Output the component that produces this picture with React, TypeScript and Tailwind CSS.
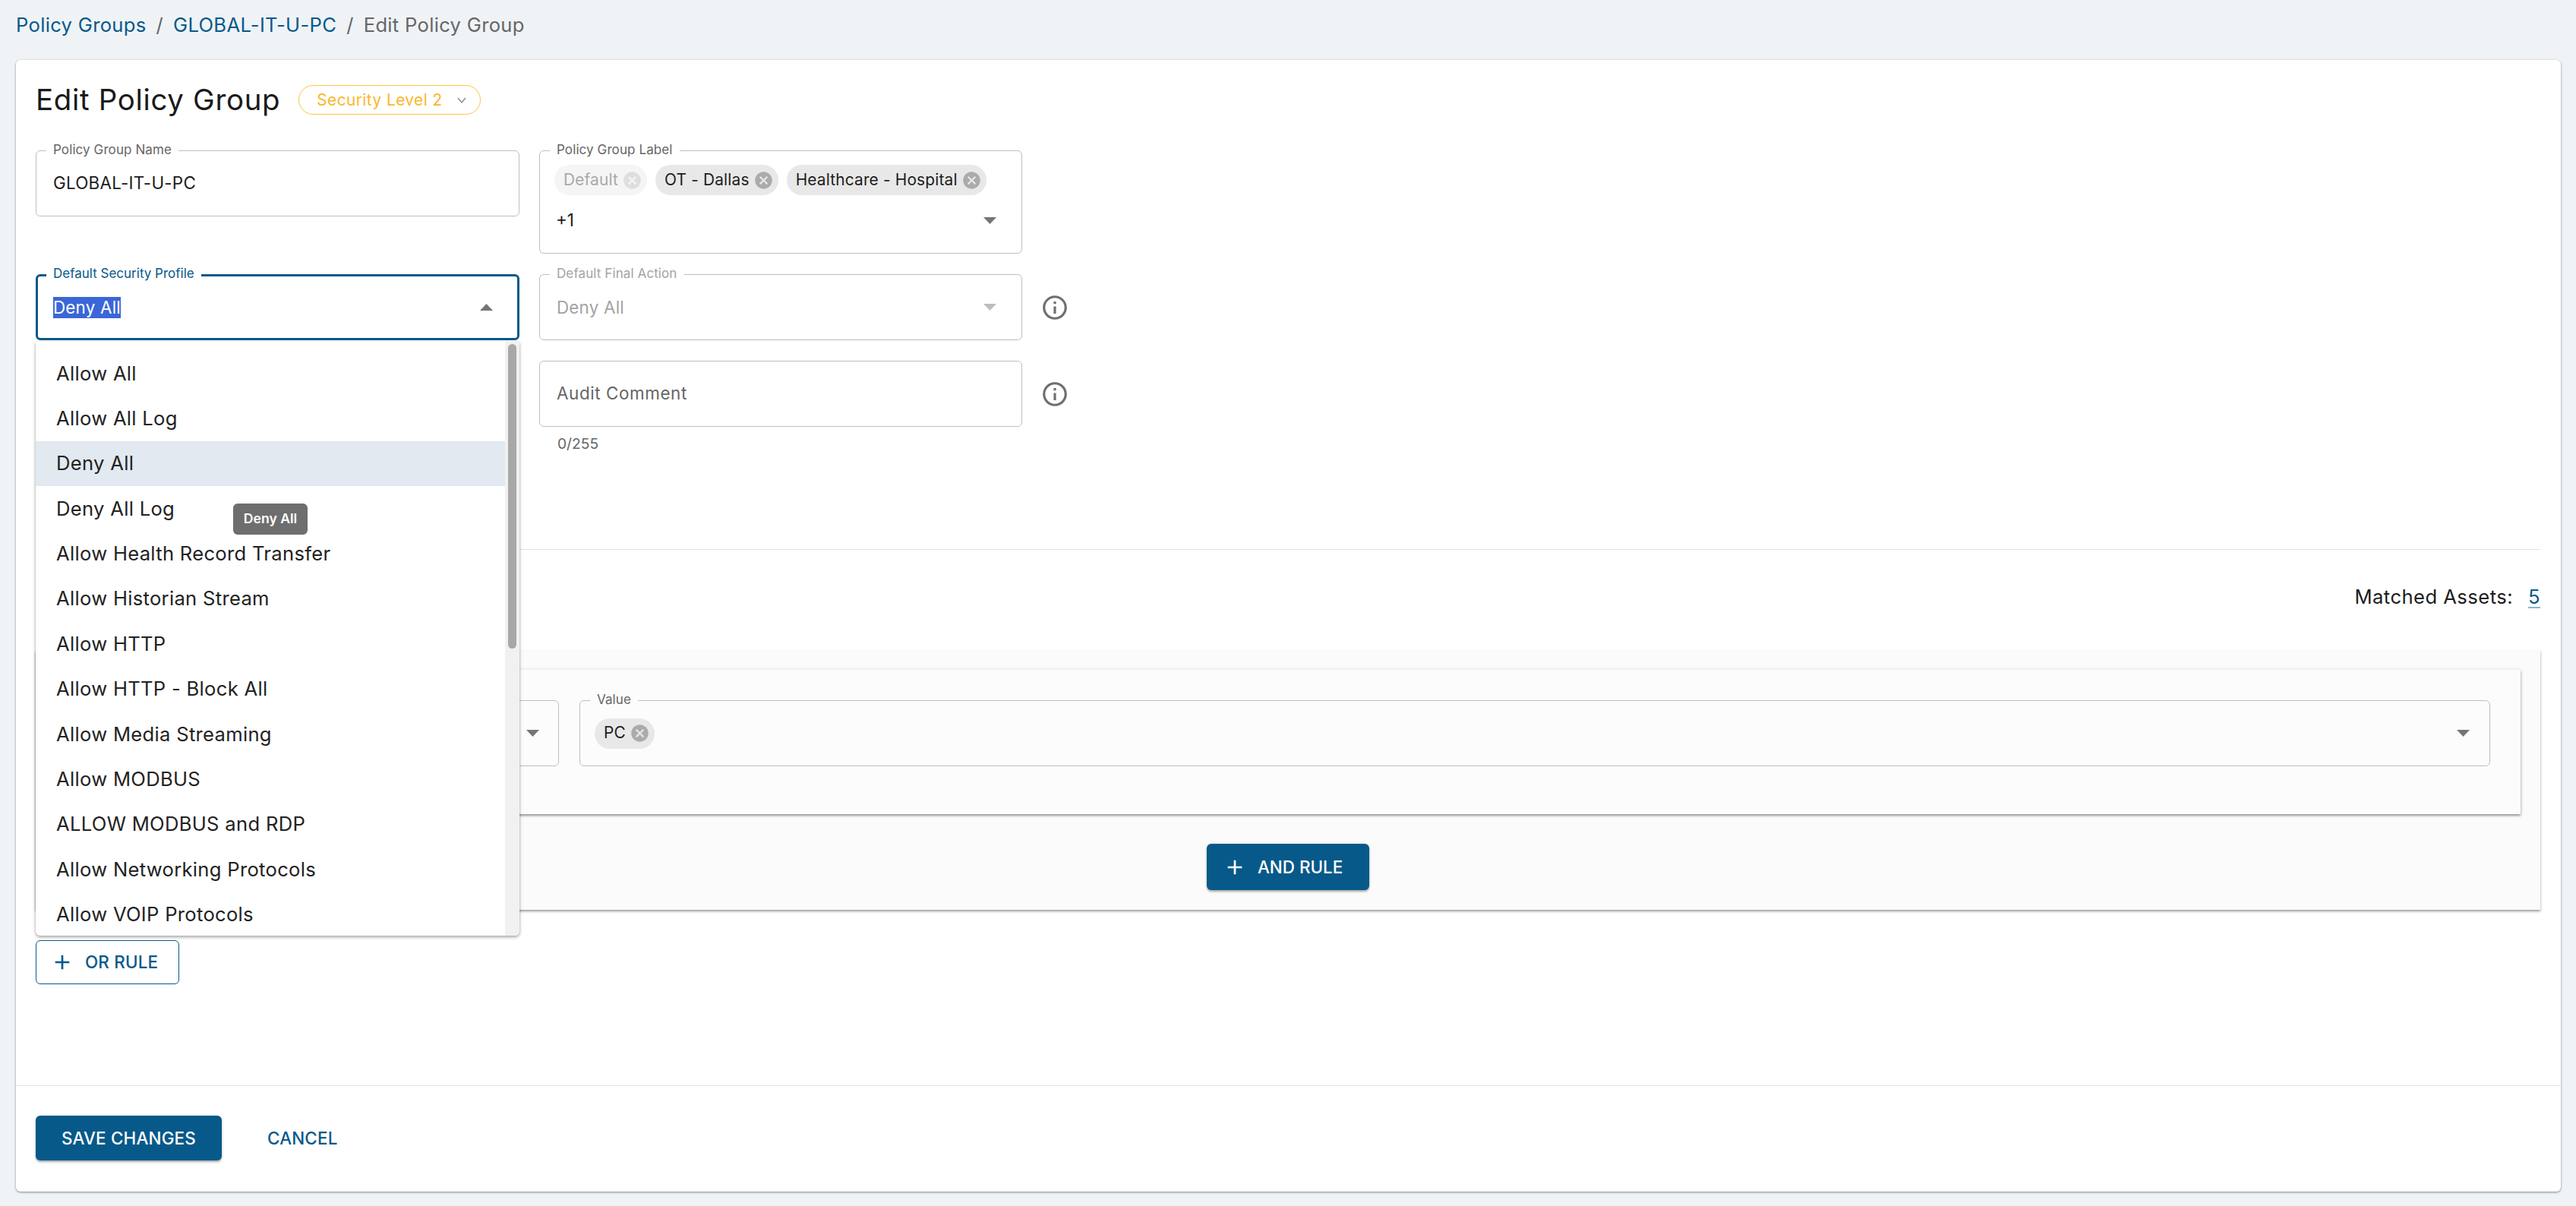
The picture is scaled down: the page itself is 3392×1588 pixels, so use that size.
import type { ReactNode } from 'react';

const menuItems = [
  'Allow All',
  'Allow All Log',
  'Deny All',
  'Deny All Log',
  'Allow Health Record Transfer',
  'Allow Historian Stream',
  'Allow HTTP',
  'Allow HTTP - Block All',
  'Allow Media Streaming',
  'Allow MODBUS',
  'ALLOW MODBUS and RDP',
  'Allow Networking Protocols',
  'Allow VOIP Protocols',
];

function Caret({ up = false, className = 'fill-[#757575]' }: { up?: boolean; className?: string }) {
  return (
    <svg width="17" height="9" viewBox="0 0 17 9" className={`${className} shrink-0 ${up ? 'rotate-180' : ''}`}>
      <path d="M0 0h17l-8.5 9z" />
    </svg>
  );
}

function ChipX({ className }: { className: string }) {
  return (
    <svg width="27" height="27" viewBox="0 0 24 24" className={`${className} shrink-0`}>
      <path d="M12 2C6.47 2 2 6.47 2 12s4.47 10 10 10 10-4.47 10-10S17.53 2 12 2zm5 13.59L15.59 17 12 13.41 8.41 17 7 15.59 10.59 12 7 8.41 8.41 7 12 10.59 15.59 7 17 8.41 13.41 12 17 15.59z" />
    </svg>
  );
}

function Chip({ label, disabled = false }: { label: string; disabled?: boolean }) {
  return (
    <span
      className={`flex h-[40px] items-center gap-[5px] rounded-full pl-[12px] pr-[6px] text-[20.8px] leading-none tracking-[0.2px] ${
        disabled ? 'bg-[#f5f5f5] text-[#a9a9a9]' : 'bg-[#e8e8e8] text-[#1c1c1c]'
      }`}
    >
      {label}
      <ChipX className={disabled ? 'fill-[#dedede]' : 'fill-[#ababab]'} />
    </span>
  );
}

function InfoIcon() {
  return (
    <svg width="38" height="38" viewBox="0 0 24 24" className="ml-[24px] shrink-0 fill-[#6f6f6f]">
      <path d="M11 7h2v2h-2zm0 4h2v6h-2zm1-9C6.48 2 2 6.48 2 12s4.48 10 10 10 10-4.48 10-10S17.52 2 12 2zm0 18c-4.41 0-8-3.59-8-8s3.59-8 8-8 8 3.59 8 8-3.59 8-8 8z" />
    </svg>
  );
}

function Plus({ className }: { className: string }) {
  return (
    <svg width="32" height="32" viewBox="0 0 24 24" className={className}>
      <path d="M19 13h-6v6h-2v-6H5v-2h6V5h2v6h6v2z" />
    </svg>
  );
}

function Field({
  label,
  labelColor = 'text-[#666666]',
  labelBg = 'bg-white',
  className = '',
  children,
}: {
  label?: string;
  labelColor?: string;
  labelBg?: string;
  className?: string;
  children?: ReactNode;
}) {
  return (
    <div className={`relative rounded-[6px] border border-[#bfbfbf] ${className}`}>
      {label && (
        <span className={`absolute left-[13px] top-[-12px] px-[9px] text-[17px] leading-[20px] tracking-[0.1px] ${labelBg} ${labelColor}`}>
          {label}
        </span>
      )}
      {children}
    </div>
  );
}

function Dropdown() {
  return (
    <div className="absolute left-0 top-[89px] z-10 flex h-[782px] w-[637px] overflow-hidden rounded-b-[6px] bg-white shadow-[0_2px_4px_rgba(0,0,0,0.35),0_0_3px_rgba(0,0,0,0.08)]">
      <div className="flex-1 pt-[12px]">
        {menuItems.map((item) => (
          <div
            key={item}
            className={`flex h-[59.4px] items-center px-[27px] text-[25.6px] tracking-[0.3px] text-[#222222] ${
              item === 'Deny All' ? 'bg-[#e2e9f0]' : ''
            }`}
          >
            {item}
          </div>
        ))}
      </div>
      <div className="w-[19px] bg-[#f1f1f1] px-[4px] pt-[3px]">
        <div className="h-[401px] rounded-full bg-[#a8a8a8]" />
      </div>
      <div className="absolute left-[260px] top-[213px] flex h-[41px] w-[98px] items-center justify-center rounded-[6px] bg-[#6e6e6e] text-[17.6px] font-semibold text-white">
        Deny All
      </div>
    </div>
  );
}

export default function App() {
  return (
    <div className="flex h-[1588px] flex-col overflow-hidden bg-[#eff3f6] font-[370] text-[#1c1c1c] [font-family:Inter,sans-serif]">
      {/* Breadcrumbs */}
      <nav className="flex h-[66px] items-center gap-[13px] px-[21px] text-[25.6px] tracking-[0.3px]">
        <span className="text-[#07598a]">Policy Groups</span>
        <span className="text-[#666666]">/</span>
        <span className="text-[#07598a]">GLOBAL-IT-U-PC</span>
        <span className="text-[#666666]">/</span>
        <span className="text-[#666666]">Edit Policy Group</span>
      </nav>

      <div className="ml-[21px] mr-[20px] mt-[13px] flex h-[1490px] flex-col rounded-[6px] bg-white pt-[33px] shadow-[0_1px_3px_rgba(0,0,0,0.45)]">
        <div className="pl-[26px] pr-[27px]">
          {/* Title */}
          <div className="flex h-[39px] items-center">
            <h1 className="text-[38.4px] font-normal leading-none tracking-[0.7px] text-[#1a1a1a]">Edit Policy Group</h1>
            <button className="ml-[24px] flex h-[39px] w-[240px] items-center rounded-full border border-[#fcc541] pl-[23px] text-[20.8px] tracking-[0.45px] text-[#fbb62c]">
              Security Level 2
              <svg width="12" height="8" viewBox="0 0 12 8" className="ml-[19px] fill-none stroke-[#8a8a8a] stroke-[1.4]">
                <path d="M1 1l5 6 5-6" />
              </svg>
            </button>
          </div>

          {/* Form */}
          <div className="mt-[47px] flex gap-[26px]">
            <Field label="Policy Group Name" className="flex h-[87px] w-[637px] items-center pb-[2px] pl-[22px] text-[22.4px] tracking-[0.25px]">
              GLOBAL-IT-U-PC
            </Field>
            <Field label="Policy Group Label" className="h-[136px] w-[636px] pl-[19px] pr-[33px] pt-[18px]">
              <div className="flex gap-[11px]">
                <Chip label="Default" disabled />
                <Chip label="OT - Dallas" />
                <Chip label="Healthcare - Hospital" />
              </div>
              <div className="mt-[15px] flex h-[36px] items-center justify-between pl-[2px] text-[22.4px]">
                +1
                <Caret />
              </div>
            </Field>
          </div>

          <div className="relative mt-[27px] flex items-center gap-[26px]">
            <div className="relative flex h-[87px] w-[637px] items-center justify-between rounded-[6px] border-[3px] border-[#07598a] pl-[20px] pr-[32px]">
              <span className="absolute left-[11px] top-[-14px] bg-white px-[9px] text-[17px] leading-[20px] text-[#07598a]">
                Default Security Profile
              </span>
              <span className="bg-[#3a66d8] text-[22.4px] leading-[28px] tracking-[0.2px] text-white">Deny All</span>
              <Caret up />
            </div>
            <div className="flex items-center">
              <Field
                label="Default Final Action"
                labelColor="text-[#a3a3a3]"
                className="flex h-[87px] w-[636px] items-center justify-between pl-[22px] pr-[33px] text-[22.4px] tracking-[0.2px] text-[#a3a3a3]"
              >
                Deny All
                <Caret className="fill-[#bdbdbd]" />
              </Field>
              <InfoIcon />
            </div>
            <Dropdown />
          </div>

          <div className="mt-[27px] flex items-center pl-[663px]">
            <Field className="flex h-[87px] w-[636px] items-center pb-[1px] pl-[22px] text-[22.4px] tracking-[0.6px] text-[#666666]">
              Audit Comment
            </Field>
            <InfoIcon />
          </div>
          <div className="ml-[687px] mt-[10px] text-[19.2px] leading-[24px] text-[#666666]">0/255</div>

          <div className="mt-[127px] h-px bg-[#e2e2e2]" />

          <div className="mt-[44px] flex h-[36px] items-center justify-end text-[25.6px] tracking-[0.45px]">
            Matched Assets:
            <span className="ml-[20px] text-[#07598a] underline decoration-[#8fb3c9] underline-offset-[4px]">5</span>
          </div>

          {/* Rules */}
          <div className="mt-[52px] h-[342px] bg-[#fbfbfb] pt-[26px] shadow-[0_2px_3px_rgba(0,0,0,0.4)]">
            <div className="mx-[26px] flex h-[190px] gap-[27px] bg-[#fcfcfc] px-[40px] pt-[40px] shadow-[0_2px_3px_rgba(0,0,0,0.4),0_0_6px_rgba(0,0,0,0.08)]">
              <Field className="flex h-[87px] w-[623px] items-center justify-end pr-[25px]">
                <Caret />
              </Field>
              <Field
                label="Value"
                labelBg="bg-[#fcfcfc]"
                className="flex h-[87px] flex-1 items-center justify-between pl-[19px] pr-[26px]"
              >
                <Chip label="PC" />
                <Caret />
              </Field>
            </div>
            <button className="mx-auto mt-[39px] flex h-[61px] w-[214px] items-center rounded-[6px] bg-[#07598a] pl-[21px] text-[22.4px] font-medium text-white shadow-[0_2px_3px_rgba(0,0,0,0.35)]">
              <Plus className="fill-white" />
              <span className="ml-[14px]">AND RULE</span>
            </button>
          </div>

          <button className="mt-[40px] flex h-[58px] w-[189px] items-center rounded-[6px] border border-[#07598a] pl-[18px] text-[22.4px] font-medium tracking-[0.2px] text-[#07598a]">
            <Plus className="fill-[#07598a]" />
            <span className="ml-[14px]">OR RULE</span>
          </button>
        </div>

        {/* Footer */}
        <div className="mt-auto flex h-[140px] items-start gap-[34px] border-t border-[#e2e2e2] px-[26px] pt-[39px]">
          <button className="h-[59px] w-[245px] rounded-[6px] bg-[#07598a] text-[22.4px] font-medium tracking-[0.2px] text-white shadow-[0_2px_3px_rgba(0,0,0,0.35)]">
            SAVE CHANGES
          </button>
          <button className="ml-[26px] h-[59px] text-[22.4px] font-medium tracking-[0.2px] text-[#07598a]">CANCEL</button>
        </div>
      </div>
    </div>
  );
}
